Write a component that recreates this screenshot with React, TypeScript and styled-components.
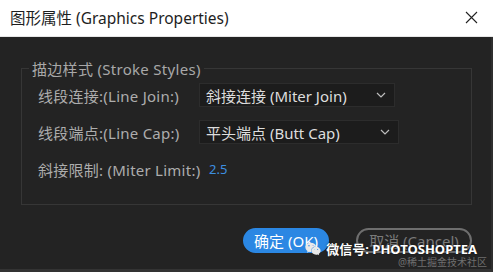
import styled, { createGlobalStyle } from "styled-components";
import { FaWeixin } from "react-icons/fa";

const GlobalStyle = createGlobalStyle`
  html, body {
    margin: 0;
    padding: 0;
    background: #232323;
  }
  * {
    box-sizing: border-box;
  }
`;

const FONT = `"Noto Sans", "Noto Sans CJK SC", sans-serif`;

const Window = styled.div`
  position: relative;
  width: 493px;
  height: 272px;
  display: flex;
  flex-direction: column;
  font-family: ${FONT};
  overflow: hidden;
`;

const TitleBar = styled.div`
  height: 37px;
  flex: none;
  background: #ffffff;
  display: flex;
  align-items: center;
  justify-content: space-between;
  padding: 0 15px 0 10px;
  border-bottom: 1px solid #e6e6e6;
`;

const TitleText = styled.div`
  font-size: 15.5px;
  color: #1e1e1e;
  padding-bottom: 2px;
`;

const CloseIcon = styled.svg`
  width: 13px;
  height: 13px;
  margin-bottom: 2px;
`;

const Body = styled.div`
  flex: 1;
  background: #232323;
  padding: 21px 19px 0 21px;
  display: flex;
  flex-direction: column;
  border-right: 2px solid #2e2e2e;
  border-bottom: 3px solid #333333;
`;

const Group = styled.fieldset`
  margin: 0;
  padding: 0;
  height: 147px;
  border: 1px solid #363636;
`;

const Legend = styled.legend`
  margin-left: 7px;
  padding: 0 3px;
  font-size: 15px;
  letter-spacing: 0.3px;
  color: #a8a8a8;
`;

const Rows = styled.div`
  display: flex;
  flex-direction: column;
  gap: 13px;
  padding: 4px 0 0 16px;
`;

const Row = styled.div`
  display: flex;
  align-items: center;
  height: 24px;
`;

const Label = styled.div`
  flex: none;
  width: 161px;
  font-size: 15px;
  letter-spacing: 0.25px;
  color: #adadad;
  white-space: nowrap;
`;

const Select = styled.div<{ width: number }>`
  width: ${(p) => p.width}px;
  height: 24px;
  background: #1c1c1c;
  border: 1px solid #2c2c2c;
  display: flex;
  align-items: center;
  justify-content: space-between;
  padding: 0 8px 0 6px;
  font-size: 15px;
  color: #dedede;
`;

const Chevron = styled.svg`
  width: 10px;
  height: 6px;
`;

const Value = styled.div`
  margin-left: 10px;
  font-size: 13px;
  color: #3d8fe0;
`;

const Footer = styled.div`
  display: flex;
  justify-content: flex-end;
  gap: 27px;
  padding: 23px 0 0 0;
`;

const Button = styled.div<{ primary?: boolean; width: number }>`
  width: ${(p) => p.width}px;
  height: 25px;
  border-radius: 13px;
  display: flex;
  align-items: center;
  justify-content: center;
  font-size: 15px;
  color: ${(p) => (p.primary ? "#ffffff" : "#7a7a7a")};
  background: ${(p) => (p.primary ? "#2b87e3" : "transparent")};
  border: 2px solid ${(p) => (p.primary ? "#2b87e3" : "#6e6e6e")};
`;

const Watermark = styled.div`
  position: absolute;
  right: 6px;
  bottom: 4px;
  display: flex;
  flex-direction: column;
  align-items: flex-end;
  gap: 1px;
`;

const WechatLine = styled.div`
  display: flex;
  align-items: center;
  gap: 5px;
  height: 14px;
  line-height: 14px;
  margin-right: 10px;
  font-size: 13px;
  font-weight: 700;
  color: #ffffff;
  text-shadow: 0 0 2px rgba(0, 0, 0, 0.6);
  svg {
    width: 16px;
    height: 16px;
    color: #e8e8e8;
  }
`;

const Credit = styled.div`
  font-size: 10px;
  line-height: 11px;
  color: #6f6f6f;
`;

function ChevronDown() {
  return (
    <Chevron viewBox="0 0 10 6">
      <path d="M1 1 L5 5 L9 1" fill="none" stroke="#bdbdbd" strokeWidth="1.2" />
    </Chevron>
  );
}

export default function App() {
  return (
    <>
      <GlobalStyle />
      <Window>
        <TitleBar>
          <TitleText>图形属性 (Graphics Properties)</TitleText>
          <CloseIcon viewBox="0 0 13 13">
            <path d="M1 1 L12 12 M12 1 L1 12" stroke="#222" strokeWidth="1.1" />
          </CloseIcon>
        </TitleBar>
        <Body>
          <Group>
            <Legend>描边样式 (Stroke Styles)</Legend>
            <Rows>
              <Row>
                <Label>线段连接:(Line Join:)</Label>
                <Select width={196}>
                  斜接连接 (Miter Join)
                  <ChevronDown />
                </Select>
              </Row>
              <Row>
                <Label>线段端点:(Line Cap:)</Label>
                <Select width={200}>
                  平头端点 (Butt Cap)
                  <ChevronDown />
                </Select>
              </Row>
              <Row>
                <Label>斜接限制: (Miter Limit:)</Label>
                <Value>2.5</Value>
              </Row>
            </Rows>
          </Group>
          <Footer>
            <Button primary width={86}>
              确定 (OK)
            </Button>
            <Button width={116}>取消 (Cancel)</Button>
          </Footer>
        </Body>
        <Watermark>
          <WechatLine>
            <FaWeixin />
            微信号: PHOTOSHOPTEA
          </WechatLine>
          <Credit>@稀土掘金技术社区</Credit>
        </Watermark>
      </Window>
    </>
  );
}
